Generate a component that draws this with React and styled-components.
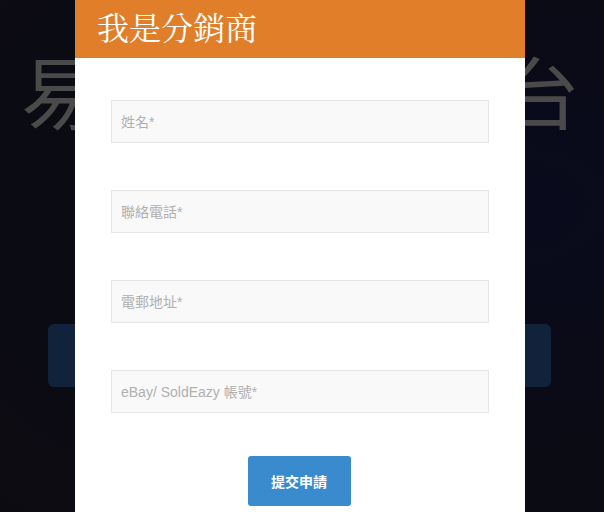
import React from "react";
import styled, { createGlobalStyle } from "styled-components";

const Global = createGlobalStyle`
  html, body {
    margin: 0;
    padding: 0;
    height: 100%;
  }
  body {
    background: #0b0b14;
    font-family: "Liberation Sans", "Noto Sans CJK TC", sans-serif;
  }
`;

const Page = styled.div`
  min-height: 100vh;
  background: radial-gradient(ellipse at 85% 40%, #090a1c 0%, #0b0b14 60%, #0d0b12 100%);
  display: flex;
  flex-direction: column;
  padding-top: 40px;
  box-sizing: border-box;
`;

const HeroTitle = styled.h1`
  margin: 0 0 0 -2px;
  text-align: center;
  font-family: "Noto Sans CJK TC", sans-serif;
  font-weight: 400;
  font-size: 79px;
  line-height: 100px;
  color: #4a4a4a;
  letter-spacing: 1px;
  white-space: nowrap;
`;

const HeroButton = styled.div`
  margin: 184px 53px 0 48px;
  height: 63px;
  border-radius: 6px;
  background: #10233a;
`;

const Overlay = styled.div`
  position: fixed;
  inset: 0;
  display: flex;
  justify-content: center;
  align-items: flex-start;
`;

const Modal = styled.div`
  width: 450px;
  background: #fff;
  margin-left: -4px;
  min-height: 100%;
`;

const Header = styled.div`
  height: 58px;
  background: #e07e29;
  display: flex;
  align-items: center;
  padding-left: 22px;
`;

const Title = styled.h2`
  margin: 0;
  color: #fff;
  font-family: "Liberation Serif", "Noto Serif CJK TC", "Noto Sans CJK TC", serif;
  font-weight: 400;
  font-size: 32px;
  line-height: 40px;
`;

const Form = styled.form`
  display: flex;
  flex-direction: column;
  padding: 42px 36px 0;
  gap: 47px;
`;

const Field = styled.input`
  height: 43px;
  box-sizing: border-box;
  border: 1px solid #e6e6e6;
  background: #f9f9f9;
  padding: 0 9px;
  font-family: "Liberation Sans", "Noto Sans CJK TC", sans-serif;
  font-size: 14px;
  outline: none;
  &::placeholder {
    color: #b0b0b0;
  }
`;

const Submit = styled.button`
  align-self: center;
  margin: -4px 0 0 -2px;
  width: 103px;
  height: 50px;
  border: none;
  border-radius: 3px;
  background: #3a8bcd;
  color: #fff;
  font-family: "Noto Sans CJK TC", sans-serif;
  font-weight: 700;
  font-size: 14px;
  cursor: pointer;
`;

const fields = ["姓名*", "聯絡電話*", "電郵地址*", "eBay/ SoldEazy 帳號*"];

export default function App() {
  return (
    <>
      <Global />
      <Page>
        <HeroTitle>易賣寶分銷平台</HeroTitle>
        <HeroButton />
      </Page>
      <Overlay>
        <Modal>
          <Header>
            <Title>我是分銷商</Title>
          </Header>
          <Form onSubmit={(e) => e.preventDefault()}>
            {fields.map((f) => (
              <Field key={f} placeholder={f} />
            ))}
            <Submit type="submit">提交申請</Submit>
          </Form>
        </Modal>
      </Overlay>
    </>
  );
}
